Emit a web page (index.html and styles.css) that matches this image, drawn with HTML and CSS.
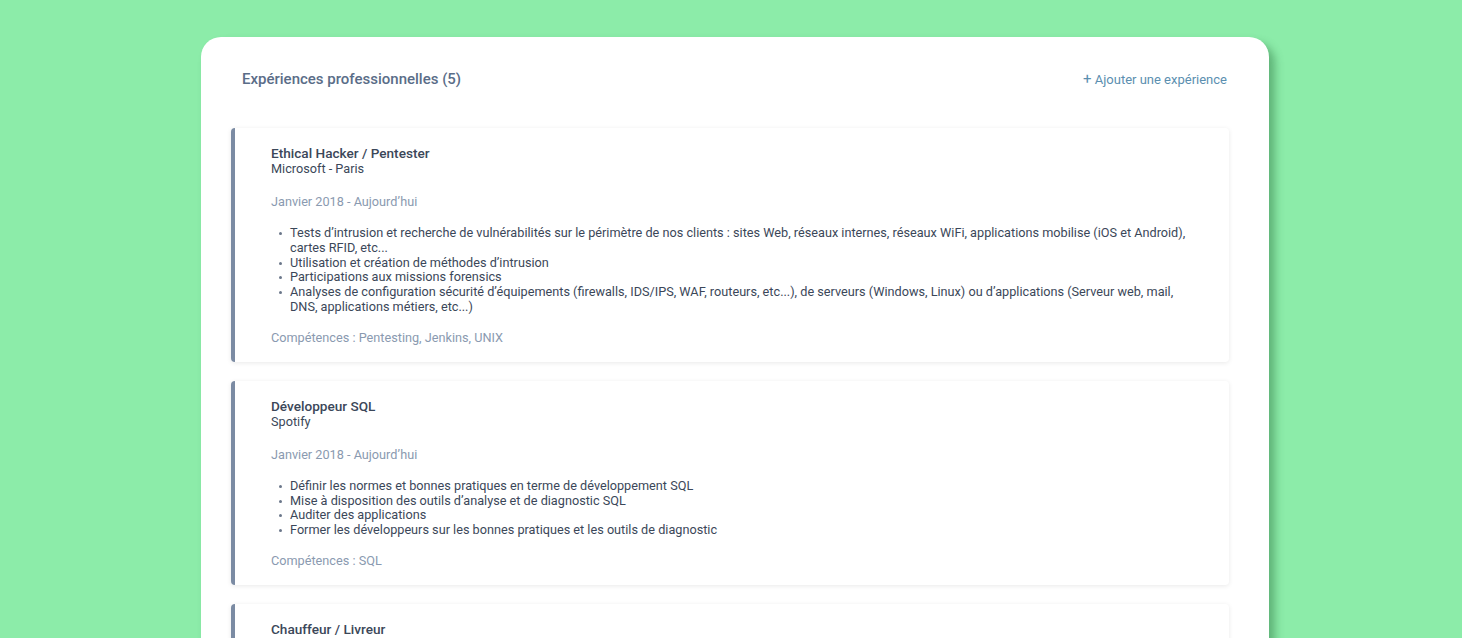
FILE: index.html
```html
<!DOCTYPE html>
<html lang="fr">
<head>
  <meta charset="UTF-8">
  <meta name="viewport" content="width=device-width, initial-scale=1.0">
  <title>Expériences professionnelles</title>
  <link rel="stylesheet" href="styles.css">
</head>
<body>
  <div class="panel">
    <div class="panel-header">
      <h2 class="panel-title">Expériences professionnelles (5)</h2>
      <a class="add-link" href="#"><span class="plus">+</span> Ajouter une expérience</a>
    </div>

    <div class="experiences">
      <div class="experience">
        <div class="job">Ethical Hacker / Pentester</div>
        <div class="company">Microsoft - Paris</div>
        <div class="dates">Janvier 2018 - Aujourd’hui</div>
        <ul class="tasks">
          <li>Tests d’intrusion et recherche de vulnérabilités sur le périmètre de nos clients : sites Web, réseaux internes, réseaux WiFi, applications mobilise (iOS et Android), cartes RFID, etc...</li>
          <li>Utilisation et création de méthodes d’intrusion</li>
          <li>Participations aux missions forensics</li>
          <li>Analyses de configuration sécurité d’équipements (firewalls, IDS/IPS, WAF, routeurs, etc...), de serveurs (Windows, Linux) ou d’applications (Serveur web, mail, DNS, applications métiers, etc...)</li>
        </ul>
        <div class="skills">Compétences : Pentesting, Jenkins, UNIX</div>
      </div>

      <div class="experience">
        <div class="job">Développeur SQL</div>
        <div class="company">Spotify</div>
        <div class="dates">Janvier 2018 - Aujourd’hui</div>
        <ul class="tasks">
          <li>Définir les normes et bonnes pratiques en terme de développement SQL</li>
          <li>Mise à disposition des outils d’analyse et de diagnostic SQL</li>
          <li>Auditer des applications</li>
          <li>Former les développeurs sur les bonnes pratiques et les outils de diagnostic</li>
        </ul>
        <div class="skills">Compétences : SQL</div>
      </div>

      <div class="experience">
        <div class="job">Chauffeur / Livreur</div>
        <div class="company">DHL</div>
        <div class="dates">Mars 2015 - Décembre 2017</div>
        <ul class="tasks">
          <li>Livraison de colis auprès des particuliers et des professionnels</li>
          <li>Chargement et déchargement du véhicule</li>
        </ul>
        <div class="skills">Compétences : Permis B</div>
      </div>
    </div>
  </div>
</body>
</html>
```

FILE: styles.css
```css
body {
  font-family: Roboto, "Liberation Sans", sans-serif;
  margin: 0;
  background-color: #8ceca9;
  height: 638px;
  overflow: hidden;
}
.panel {
  width: 986px;
  margin: 37px 0 0 201px;
  padding: 28px 42px 40px 40px;
  background: #fff;
  border-radius: 20px;
  box-shadow: 6px 6px 8px rgba(40, 110, 60, 0.45);
}
.panel-header {
  display: flex;
  justify-content: space-between;
  align-items: center;
  height: 27px;
  margin-bottom: 36px;
}
.panel-title {
  margin: 0 0 0 1px;
  font-size: 15px;
  font-weight: 500;
  color: #5a6d88;
}
.add-link {
  font-size: 13px;
  color: #5b8fb0;
  text-decoration: none;
}
.add-link .plus {
  font-size: 15px;
}
.experiences {
  display: flex;
  flex-direction: column;
  gap: 19px;
  margin-left: -10px;
  margin-right: -2px;
}
.experience {
  padding: 17px 30px 16px 36px;
  border-left: 4px solid #7b8ba3;
  border-radius: 4px;
  background: #fff;
  box-shadow: 0 1px 5px rgba(0, 0, 0, 0.09);
  font-size: 12.7px;
  color: #3b4759;
}
.job {
  font-size: 13.6px;
  font-weight: 500;
  line-height: 16px;
}
.company {
  line-height: 16px;
}
.dates {
  margin-top: 17px;
  line-height: 16px;
  color: #8a9ab0;
}
.tasks {
  list-style: none;
  margin: 16px 0 0;
  padding: 0 0 0 19px;
  line-height: 14.8px;
}
.tasks li {
  position: relative;
}
.tasks li::before {
  content: "";
  position: absolute;
  left: -11px;
  top: 6px;
  width: 3px;
  height: 3px;
  border-radius: 50%;
  background: #6b778a;
}
.skills {
  margin-top: 15px;
  line-height: 16px;
  color: #8a9ab0;
}
```
